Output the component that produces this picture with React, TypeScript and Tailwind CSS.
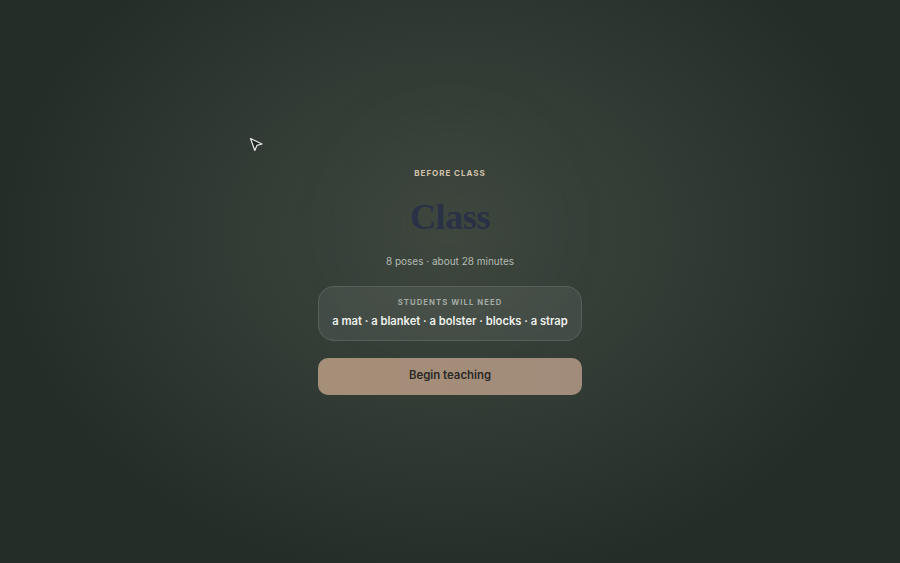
export default function App() {
  return (
    <div
      className="relative w-full h-[563px] overflow-hidden flex items-center justify-center bg-[radial-gradient(ellipse_50%_62%_at_50%_42%,#3b463f_0%,#333d36_45%,#2b342f_75%,#252d29_100%)]"
      style={{ fontFamily: 'Inter, "Liberation Sans", sans-serif' }}
    >
      {/* soft warm glow behind the title */}
      <div className="absolute left-[380px] top-[150px] w-[140px] h-[150px] rounded-full bg-[#4a4d3c]/25 blur-2xl" />

      {/* pointer */}
      <svg className="absolute left-[249px] top-[137px]" width="15" height="16" viewBox="0 0 15 16">
        <path d="M1.5 1.5 L13 7 L8 8.3 L5.8 13.5 Z" fill="#1f2622" stroke="#e8ebe8" strokeWidth="1.2" strokeLinejoin="round" />
      </svg>

      <div className="relative w-[264px] flex flex-col items-center">
        <p className="text-[8px] font-bold tracking-[0.12em] text-[#d3c2ad] leading-none">BEFORE CLASS</p>
        <h1
          className="mt-[22px] text-[36px] font-bold leading-none text-[#293146] tracking-[-0.01em]"
          style={{ fontFamily: '"Liberation Serif", "DejaVu Serif", serif' }}
        >
          Class
        </h1>
        <p className="mt-[21px] text-[10px] text-[#b3bab4] leading-none">8 poses · about 28 minutes</p>

        <div className="mt-[20px] w-full h-[55px] rounded-[16px] border border-white/10 bg-white/[0.07] flex flex-col items-center pt-[12px] gap-[10px]">
          <p className="text-[7.7px] font-bold tracking-[0.14em] text-[#a3aba5] leading-none">STUDENTS WILL NEED</p>
          <p className="text-[11.2px] font-semibold text-[#eef0ec] leading-none">
            a mat · a blanket · a bolster · blocks · a strap
          </p>
        </div>

        <button className="mt-[17px] w-full h-[37px] rounded-[10px] bg-gradient-to-r from-[#a68f78] to-[#a18c7b] text-[11.4px] font-semibold text-[#2b2825]">
          Begin teaching
        </button>
      </div>
    </div>
  );
}
